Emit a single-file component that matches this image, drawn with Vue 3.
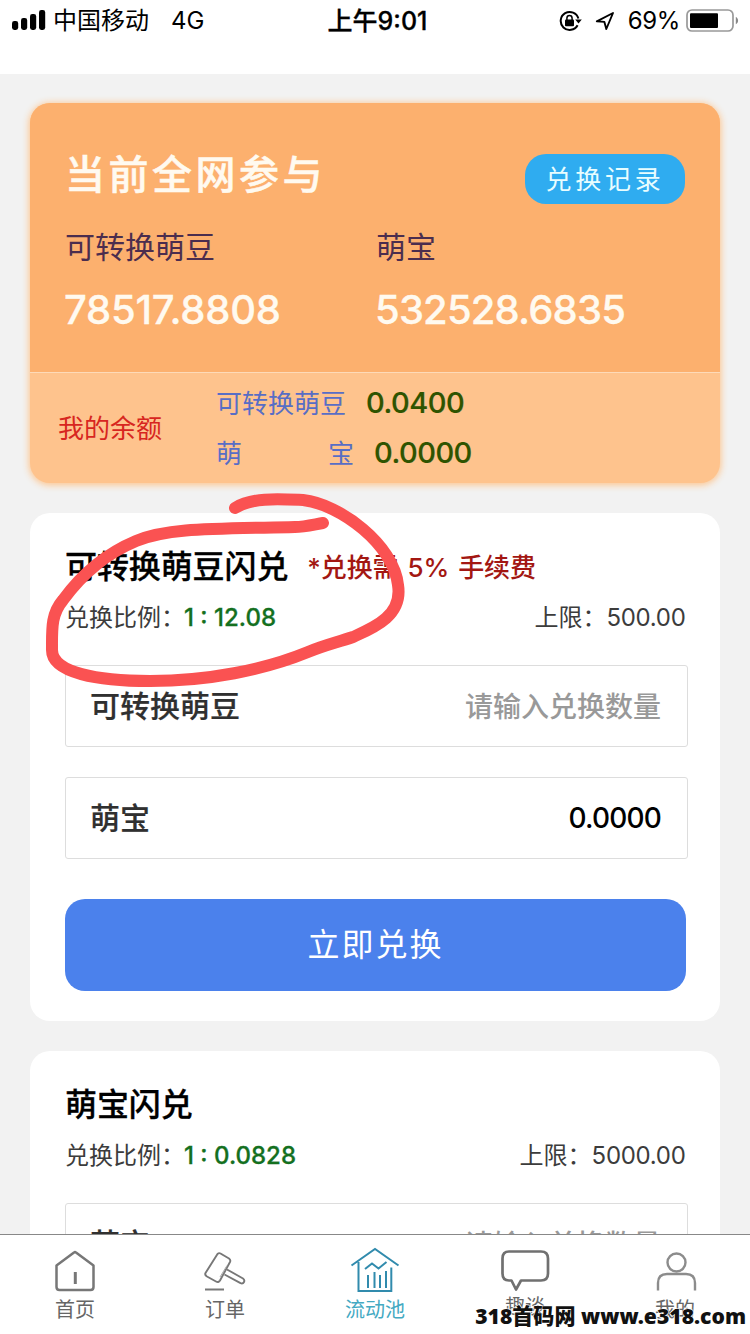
<script setup>
const pools = [
  { name: '可转换萌豆', total: '78517.8808' },
  { name: '萌宝', total: '532528.6835' },
]
const cards = [
  {
    title: '可转换萌豆闪兑', fee: ['*兑换需', '5%', '手续费'], ratio: '1 : 12.08', limit: '500.00',
    from: '可转换萌豆', to: '萌宝', result: '0.0000',
  },
  {
    title: '萌宝闪兑', fee: null, ratio: '1 : 0.0828', limit: '5000.00',
    from: '萌宝', to: '可转换萌豆', result: '0.0000',
  },
]
</script>

<template>
  <div class="screen">
    <header class="status">
      <div class="left">
        <svg class="signal" width="34" height="20" viewBox="0 0 34 20">
          <rect x="0" y="11" width="6.2" height="9" rx="2.4" />
          <rect x="9" y="8" width="6.2" height="12" rx="2.4" />
          <rect x="18" y="4" width="6.2" height="16" rx="2.4" />
          <rect x="27" y="0" width="6.2" height="20" rx="2.4" />
        </svg>
        <span class="carrier">中国移动</span>
        <span class="network">4G</span>
      </div>
      <div class="time">上午9:01</div>
      <div class="right">
        <svg width="24" height="22" viewBox="0 0 24 22" fill="none" stroke="#000" stroke-width="2">
          <path d="M18.6 15.3A9 9 0 1 1 19.4 8.6" />
          <path d="M16.2 9.6h6.6l-3.3 4z" fill="#000" stroke="none" />
          <rect x="6" y="9.6" width="9" height="6.6" rx="1" fill="#000" stroke="none" />
          <path d="M7.9 10V8.2a2.6 2.6 0 0 1 5.2 0V10" stroke-width="1.5" />
        </svg>
        <svg class="arrow" width="20" height="20" viewBox="0 0 20 20" fill="none" stroke="#000" stroke-width="1.9" stroke-linejoin="round">
          <path d="M1.8 10.3 18 2 11.3 18 9.4 10.9z" />
        </svg>
        <span class="percent">69%</span>
        <svg class="battery" width="54" height="24" viewBox="0 0 54 24">
          <rect x="1" y="1" width="46" height="21" rx="5" fill="none" stroke="#999" stroke-width="1.7" />
          <rect x="4" y="4.3" width="28" height="14.6" rx="1" />
          <path d="M49.8 8c3 1.2 3 6 0 7.2z" fill="#888" />
        </svg>
      </div>
    </header>

    <main class="content">
      <section class="summary">
        <div class="overview">
          <div class="heading">
            <h1>当前全网参与</h1>
            <button class="records">兑换记录</button>
          </div>
          <div class="pools">
            <div v-for="p in pools" :key="p.name" class="pool">
              <div class="pool-name">{{ p.name }}</div>
              <div class="pool-total">{{ p.total }}</div>
            </div>
          </div>
        </div>
        <div class="balance">
          <div class="mine">我的余额</div>
          <div class="assets">
            <div class="asset"><span class="bean">可转换萌豆</span><b>0.0400</b></div>
            <div class="asset"><span class="baby"><i>萌</i><i>宝</i></span><b>0.0000</b></div>
          </div>
        </div>
      </section>

      <section v-for="c in cards" :key="c.title" class="card">
        <div class="card-title">
          <h2>{{ c.title }}</h2>
          <p v-if="c.fee" class="fee"><span v-for="f in c.fee" :key="f">{{ f }}</span></p>
        </div>
        <div class="meta">
          <div class="ratio">兑换比例：<b>{{ c.ratio }}</b></div>
          <div class="limit">上限：<span>{{ c.limit }}</span></div>
        </div>
        <div class="field"><label>{{ c.from }}</label><span class="hint">请输入兑换数量</span></div>
        <div class="field"><label>{{ c.to }}</label><span class="result">{{ c.result }}</span></div>
        <button class="submit">立即兑换</button>
      </section>
    </main>

    <nav class="tabs">
      <a class="tab">
        <svg width="50" height="46" viewBox="0 0 50 46" fill="none" stroke="#777" stroke-width="2.5" stroke-linejoin="round">
          <path d="M6.5 18.5 24 5.5Q25 4.700 26 5.5L43.5 18.5V40Q43.5 43 40.5 43H9.5Q6.5 43 6.5 40Z" />
          <path d="M25.3 25v12" stroke-width="3" />
        </svg>
        <span>首页</span>
      </a>
      <a class="tab">
        <svg width="50" height="46" viewBox="0 0 50 46" fill="none" stroke="#777" stroke-width="1.9" stroke-linejoin="round">
          <path d="M17.5 7Q19 5.6 20.5 6.5L29 11.5Q31 13 30 15L20 33.5Q18.5 36 16 34.5L7 29.5Q4.5 28 5.5 26Z" />
          <path d="M27 18.5 20 30" stroke-width="1" stroke="#aaa" />
          <path d="m27 22.5 16 9q2 1.5 1 3.5t-3.5 1.2l-16-8.7" />
          <path d="M5 42.5h19" stroke-width="2" />
        </svg>
        <span>订单</span>
      </a>
      <a class="tab active">
        <svg width="50" height="46" viewBox="0 0 50 46" fill="none" stroke="#318bad" stroke-width="2">
          <path d="M1.5 18.5 25 2 48.5 18.5M8.5 15v29h32.8V20.5" />
          <path d="m15 22 7-5.5 6.5 5L36.5 15M18 28v13M24.5 25v16M30 28v13M36 24v17" />
        </svg>
        <span>流动池</span>
      </a>
      <a class="tab chat">
        <svg width="50" height="46" viewBox="0 0 50 46" fill="none" stroke="#707070" stroke-width="2.7" stroke-linejoin="round">
          <path d="M9 4.500h32q7 0 7 7v15q0 7-7 7H21L16 42.500 11.500 33.500H9q-6.500 0-6.500-7v-15q0-7 6.500-7Z" />
        </svg>
        <span>趣谈</span>
      </a>
      <a class="tab">
        <svg width="50" height="46" viewBox="0 0 50 46" fill="none" stroke="#8c8c8c" stroke-width="2.4">
          <circle cx="26.5" cy="15.500" r="9" />
          <path d="M8 43.500V36q0-9 9-9h19q9 0 9 9v7.500" />
        </svg>
        <span>我的</span>
      </a>
    </nav>

    <svg class="scribble" width="750" height="1334" viewBox="0 0 750 1334">
      <path d="M235 508C252 497 280 499 303 500C340 504 394 545 398 585C403 616 373 628 353 637C335 643 325 645 308 652C264 670 208 681 150 681C98 681 52 673 52 650C52 629 51 614 63 600C82 574 105 554 136 541C168 528 208 529 295 527C305 527 316 524 323 523" />
    </svg>
    <div class="watermark"><span>318首码网</span> <span>www.e318.com</span></div>
  </div>
</template>

<style>
body { margin: 0; overflow: hidden; }
</style>

<style scoped>
.screen {
  position: relative;
  width: 750px;
  height: 1334px;
  overflow: hidden;
  display: flex;
  flex-direction: column;
  background: #f2f2f2;
  font-family: Inter, "Noto Sans CJK SC", sans-serif;
  color: #000;
}
h1, h2, p { margin: 0; }
button { border: 0; padding: 0; font-family: inherit; display: block; }
i { font-style: normal; }
svg { display: block; flex: none; }

.status {
  box-sizing: border-box;
  height: 74px;
  flex: none;
  background: #fff;
  display: grid;
  grid-template-columns: 1fr auto 1fr;
  padding: 5px 10px 0 12px;
  line-height: 32px;
  font-size: 24px;
}
.left, .right { display: flex; align-items: center; height: 32px; }
.signal { margin: -2px 7px 0 0; }
.network { margin-left: 22px; font-size: 24px; }
.time { font-weight: 500; font-size: 25px; padding-left: 3px; -webkit-text-stroke: .3px #000; }
.right { justify-content: flex-end; }
.arrow { margin: 0 13px 0 12px; }
.percent { font-size: 24px; letter-spacing: -.4px; }
.battery { margin-left: 6px; }
.right { position: relative; }

.content { flex: 1; min-height: 0; overflow: hidden; padding: 29px 30px 0; }

.summary {
  height: 380px;
  border-radius: 20px;
  background: #fec38d;
  box-shadow: 0 1px 7px 1px #fdc48c;
  display: flex;
  flex-direction: column;
}
.overview {
  height: 270px;
  box-sizing: border-box;
  border-radius: 20px 20px 0 0;
  background: #fcb06e;
  border-bottom: 1px solid #fddab8;
  padding: 51px 35px 0;
}
.heading { display: flex; justify-content: space-between; height: 50px; }
h1 { font-size: 40px; line-height: 42px; font-weight: 500; letter-spacing: 3.5px; color: #fffaf0; -webkit-text-stroke: .5px #fffaf0; }
.records {
  width: 160px;
  height: 50px;
  border-radius: 21px;
  background: #2facf0;
  color: #e8fdff;
  font-size: 26px;
  line-height: 51px;
  letter-spacing: 3.8px;
}
.pools { display: grid; grid-template-columns: 311px 1fr; margin-top: 23px; }
.pool-name { font-size: 30px; line-height: 40px; color: #4b2d4e; }
.pool-total { font-size: 40px; line-height: 50px; margin: 18px 0 0 -1px; font-weight: 500; letter-spacing: -.25px; color: #fffaf0; -webkit-text-stroke: .3px #fffaf0; }
.pool:last-child .pool-total { letter-spacing: -.85px; }
.balance { flex: 1; display: flex; align-items: center; padding: 0 28px; font-size: 26px; }
.mine { width: 158px; color: #d7261f; padding-bottom: 3px; }
.asset { display: flex; height: 50px; line-height: 50px; color: #586ec5; }
.asset span { padding-top: 1px; }
.asset b { font-weight: 500; font-size: 29px; letter-spacing: -.5px; color: #2e5400; margin-left: 20px; -webkit-text-stroke: .2px #2e5400; }
.baby { display: flex; justify-content: space-between; width: 138px; }

.card {
  height: 508px;
  box-sizing: border-box;
  margin-top: 30px;
  border-radius: 20px;
  background: #fff;
  padding: 34px 35px 0;
}
.card-title { display: flex; height: 40px; line-height: 40px; }
h2 { font-size: 32px; font-weight: 500; line-height: 40px; letter-spacing: -.1px; -webkit-text-stroke: .3px #000; }
.fee { display: flex; gap: 9px; margin-left: 19px; padding-top: 1px; font-size: 26px; font-weight: 500; letter-spacing: -.1px; color: #a31712; }
.meta { display: flex; justify-content: space-between; height: 40px; line-height: 40px; margin-top: 11px; font-size: 24px; color: #3c3c3c; }
.meta b { font-weight: 500; color: #14701f; margin-left: -1px; -webkit-text-stroke: .3px #14701f; }
.limit { margin-right: -.5px; }
.limit span { letter-spacing: -.3px; }
.field {
  box-sizing: border-box;
  width: 623px;
  height: 82px;
  border: 1px solid #ddd;
  border-radius: 3px;
  display: flex;
  justify-content: space-between;
  align-items: center;
  padding: 0 26px 0 24px;
  margin-top: 30px;
  font-size: 30px;
  font-weight: 500;
  color: #303030;
}
.field label { padding-bottom: 4px; -webkit-text-stroke: .2px #303030; }
.meta + .field { margin-top: 27px; }
.hint { font-size: 28px; color: #999; padding-bottom: 2px; }
.result { font-size: 28px; letter-spacing: -.8px; color: #000; }
.submit {
  width: 621px;
  height: 92px;
  margin-top: 40px;
  border-radius: 20px;
  background: #4b81ec;
  color: #fff;
  font-size: 32px;
  line-height: 90px;
  letter-spacing: 2px;
}

.tabs {
  flex: none;
  box-sizing: border-box;
  height: 100px;
  border-top: 1px solid #888;
  background: #fff;
  display: grid;
  grid-template-columns: repeat(5, 1fr);
  justify-items: center;
}
.tab { display: flex; flex-direction: column; align-items: center; padding-top: 12px; font-size: 20px; line-height: 30px; color: #666; }
.tab span { margin-top: 2px; }
.tab.chat span { margin-top: -1px; }
.tab.active { color: #43a9c2; }

.scribble { position: absolute; left: 0; top: 0; pointer-events: none; }
.scribble path { fill: none; stroke: #fa5252; stroke-width: 12; stroke-linecap: round; stroke-linejoin: round; }
.watermark {
  position: absolute;
  right: 4px;
  bottom: 3px;
  font-family: "Noto Sans", "Noto Sans CJK SC", sans-serif;
  font-size: 21.1px;
  line-height: 30px;
  font-weight: 900;
  color: #111;
  white-space: nowrap;
  -webkit-text-stroke: 1.2px #fff;
  paint-order: stroke fill;
}
</style>
